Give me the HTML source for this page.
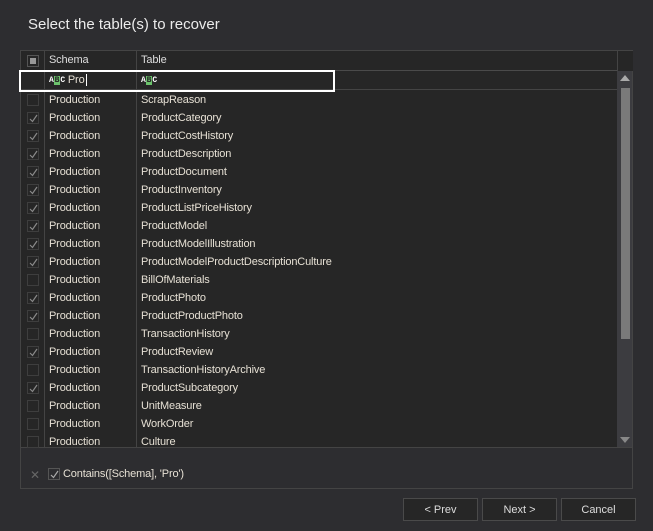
<!DOCTYPE html>
<html><head><style>
body{margin:0;width:653px;height:531px;background:#2d2d30;font-family:"Liberation Sans",sans-serif;position:relative;overflow:hidden;color:#e6e0d4}
.title{position:absolute;left:28px;top:16px;font-size:15px;color:#ececec}
.grid{position:absolute;left:20px;top:50px;width:613px;height:398px;border:1px solid #444;background:#262626;box-sizing:border-box}
.hdr{position:absolute;left:0;top:0;width:596px;height:19px;border-bottom:1px solid #4a4a4a;font-size:11px;color:#ddd}
.vl{position:absolute;top:0;width:1px;background:#444;height:396px}
.cell{position:absolute;font-size:11px;white-space:nowrap;letter-spacing:-0.15px}
.cb{position:absolute;left:6px;width:12px;height:12px;border:1px solid #3e3e3e;box-sizing:border-box}
.cb svg{position:absolute;left:0px;top:0px}
.sb{position:absolute;left:596px;top:20px;width:15px;height:376px;background:#3c3c40}
.thumb{position:absolute;left:4px;top:17px;width:9px;height:251px;background:#7a7a7a}
.filter{position:absolute;left:19px;top:70px;width:316px;height:22px;border:2px solid #fff;box-sizing:border-box}
.panel{position:absolute;left:20px;top:447px;width:613px;height:42px;border:1px solid #444;border-top:none;box-sizing:border-box}
.btn{position:absolute;top:498px;width:75px;height:23px;border:1px solid #4a4a4a;background:#262626;box-sizing:border-box;font-size:11px;color:#ddd;text-align:center;line-height:23px}
.abc{display:inline-block;font-size:8px;font-family:"Liberation Mono",monospace;color:#fff;vertical-align:1px;font-weight:bold}
.abc b{background:#6cc26c;color:#222;padding:0 1px}
</style></head><body>
<div class="title">Select the table(s) to recover</div>
<div class="grid">
 <div class="hdr">
  <div style="position:absolute;left:6px;top:4px;width:12px;height:12px;border:1px solid #555;box-sizing:border-box"><div style="position:absolute;left:2px;top:2px;width:6px;height:6px;background:#999"></div></div>
  <div class="cell" style="left:28px;top:3px">Schema</div>
  <div class="cell" style="left:120px;top:3px">Table</div>
 </div>
 <div class="vl" style="left:23px"></div>
 <div class="vl" style="left:115px"></div>
 <div style="position:absolute;left:0;top:38px;width:596px;height:1px;background:#444"></div>
 <div class="cell" style="left:28px;top:23px"><span class="abc">A<b>B</b>C</span> Pro<span style="border-left:1px solid #fff;margin-left:1px"></span></div>
 <div class="cell" style="left:120px;top:23px"><span class="abc">A<b>B</b>C</span></div>
 <div id="rows"></div>
 <div class="sb"><div style="position:absolute;left:3px;top:4px;width:0;height:0;border-left:5px solid transparent;border-right:5px solid transparent;border-bottom:6px solid #aaa"></div><div class="thumb"></div><div style="position:absolute;left:3px;top:366px;width:0;height:0;border-left:5px solid transparent;border-right:5px solid transparent;border-top:6px solid #888"></div></div>
 <div style="position:absolute;left:596px;top:0;width:15px;height:20px;border-left:1px solid #444;background:#262626"></div>
</div>
<div class="filter"></div>
<div class="panel">
 <div class="cell" style="left:9px;top:21px;color:#666;font-size:12px">✕</div>
 <div class="cb" style="left:27px;top:21px;border-color:#555"><svg width="11" height="11"><path d="M2 6L4.5 8.5L9 2" stroke="#aaa" fill="none" stroke-width="1.2"/></svg></div>
 <div class="cell" style="left:42px;top:21px">Contains([Schema], 'Pro')</div>
</div>
<div class="btn" style="left:403px">&lt; Prev</div>
<div class="btn" style="left:482px">Next &gt;</div>
<div class="btn" style="left:561px">Cancel</div>
<script>
var d=[[0,"ScrapReason"],[1,"ProductCategory"],[1,"ProductCostHistory"],[1,"ProductDescription"],[1,"ProductDocument"],[1,"ProductInventory"],[1,"ProductListPriceHistory"],[1,"ProductModel"],[1,"ProductModelIllustration"],[1,"ProductModelProductDescriptionCulture"],[0,"BillOfMaterials"],[1,"ProductPhoto"],[1,"ProductProductPhoto"],[0,"TransactionHistory"],[1,"ProductReview"],[0,"TransactionHistoryArchive"],[1,"ProductSubcategory"],[0,"UnitMeasure"],[0,"WorkOrder"],[0,"Culture"]];
var h="";d.forEach(function(r,i){var t=41+i*18;
h+='<div class="cb" style="top:'+(t+2)+'px">'+(r[0]?'<svg width="11" height="11"><path d="M2 6L4.5 8.5L9 2" stroke="#8a8a8a" fill="none" stroke-width="1.2"/></svg>':'')+'</div>';
h+='<div class="cell" style="left:28px;top:'+(t+2)+'px">Production</div><div class="cell" style="left:120px;top:'+(t+2)+'px">'+r[1]+'</div>';});
document.getElementById("rows").innerHTML=h;
</script>
</body></html>
